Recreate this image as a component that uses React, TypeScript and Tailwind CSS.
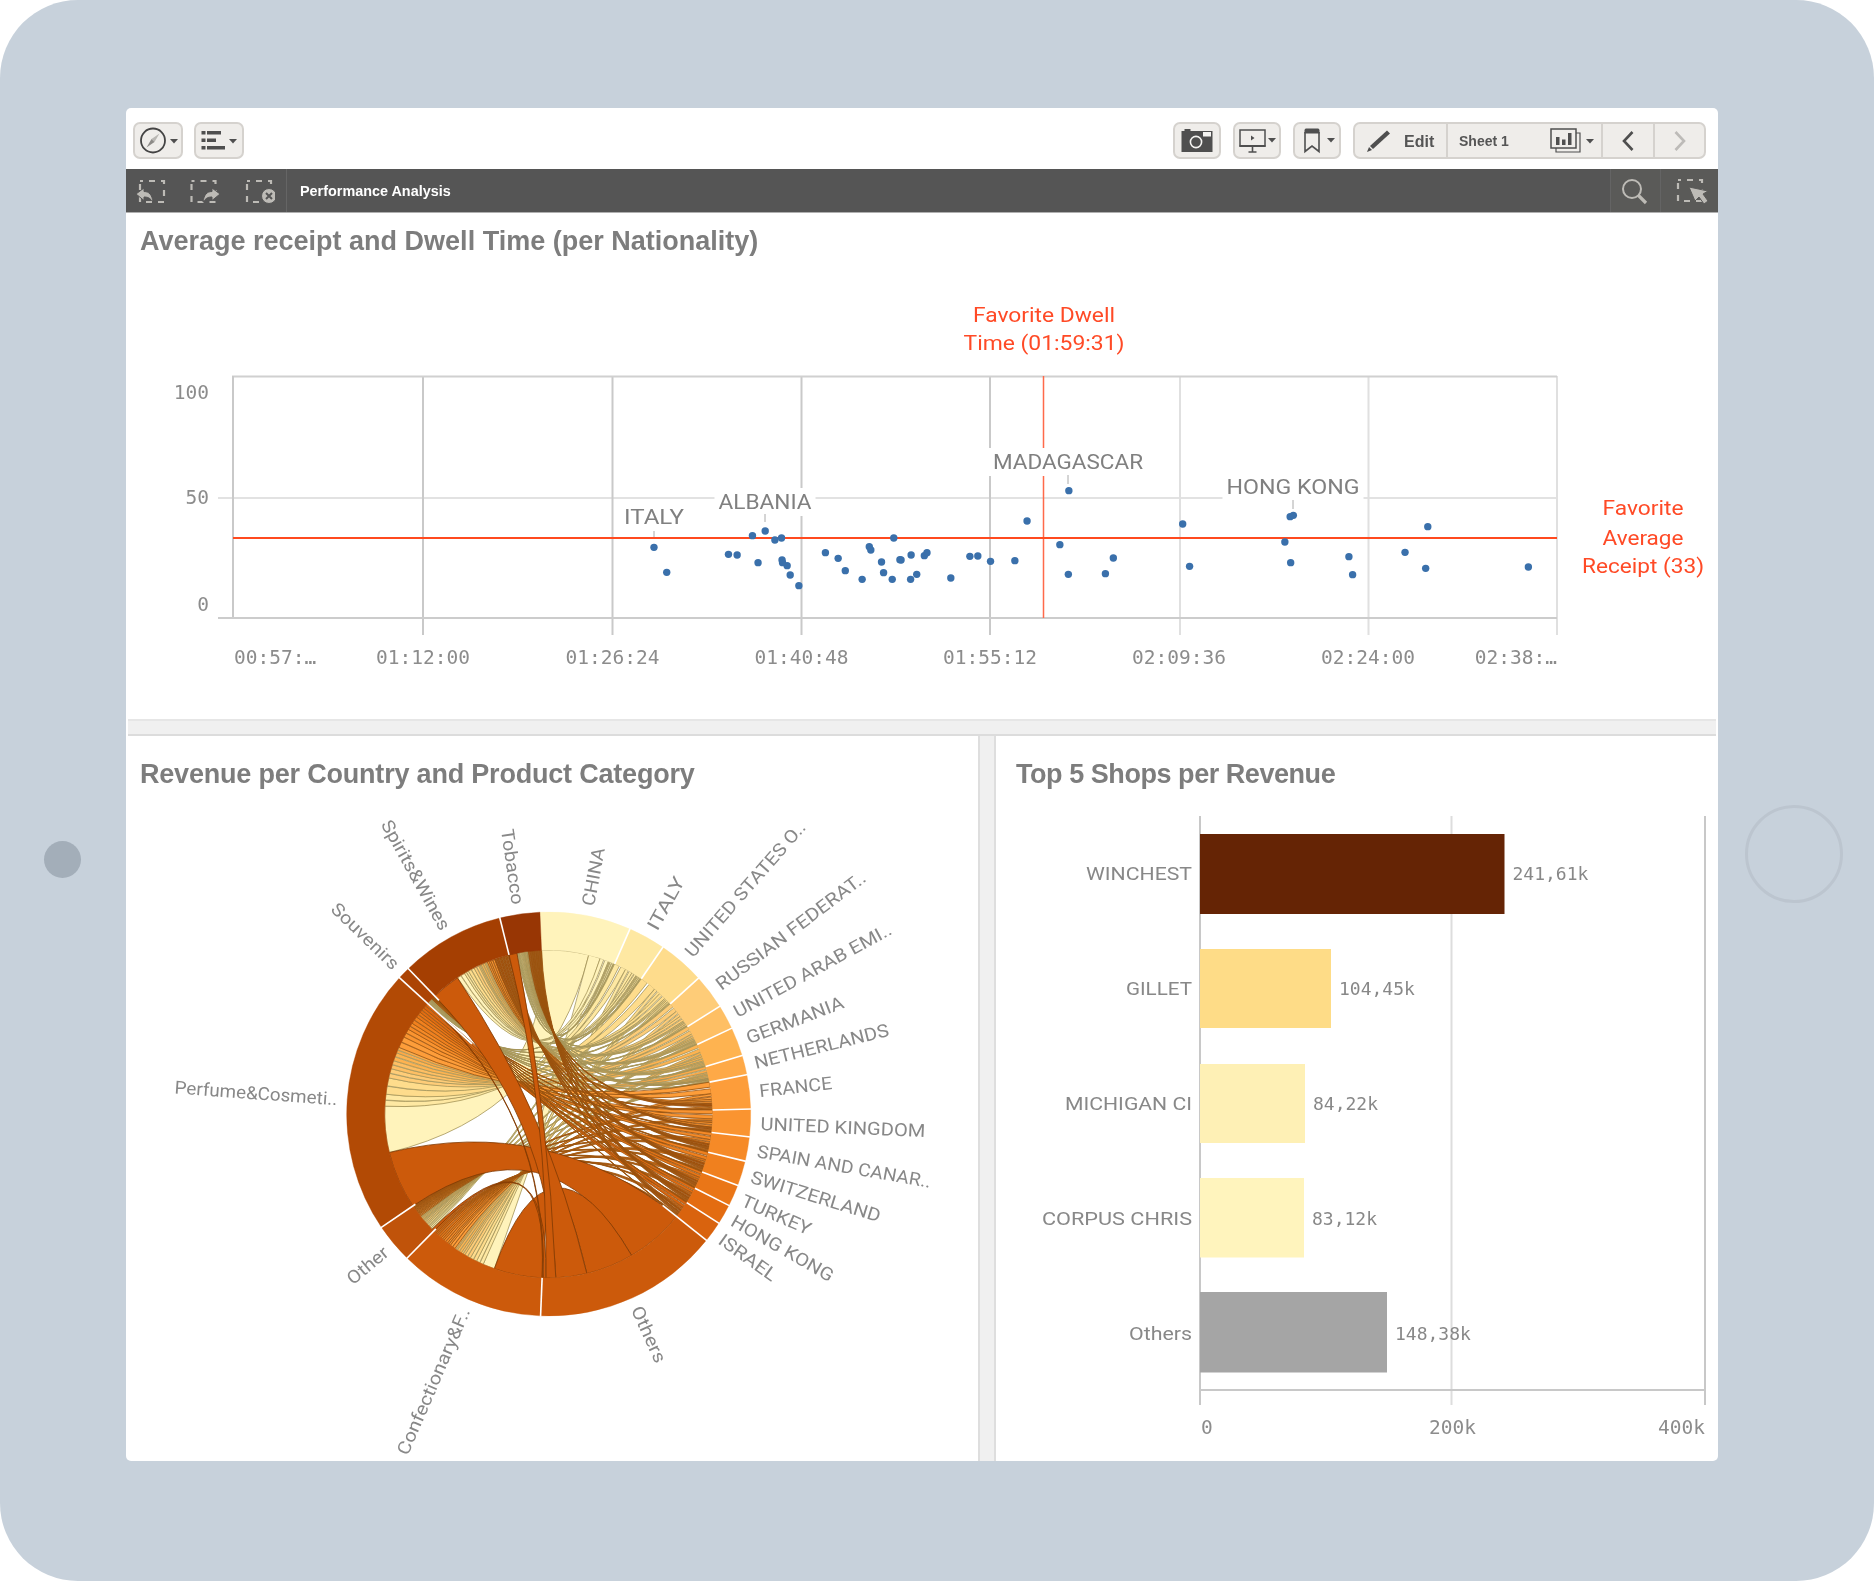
import React from "react";

const CX = 548.7, CY = 1114, R0 = 164, R1 = 202;
const rad = (d: number) => (d * Math.PI) / 180;
const pt = (a: number, r: number) => [CX + r * Math.sin(rad(a)), CY - r * Math.cos(rad(a))];
const f = (p: number[]) => `${p[0].toFixed(2)} ${p[1].toFixed(2)}`;

const countries = [
  { n: "CHINA", a: -2.5, b: 23.7, c: "#fff3bb", w: 59 },
  { n: "ITALY", a: 23.7, b: 34.4, c: "#fee8a2", w: 58 },
  { n: "UNITED STATES O..", a: 34.4, b: 47.8, c: "#fedc8c", w: 173 },
  { n: "RUSSIAN FEDERAT..", a: 47.8, b: 57.8, c: "#fecc78", w: 183 },
  { n: "UNITED ARAB EMI..", a: 57.8, b: 64.9, c: "#febf64", w: 177 },
  { n: "GERMANIA", a: 64.9, b: 73.2, c: "#feb350", w: 103 },
  { n: "NETHERLANDS", a: 73.2, b: 78.8, c: "#fea947", w: 138 },
  { n: "FRANCE", a: 78.8, b: 88.6, c: "#fd9d3a", w: 73 },
  { n: "UNITED KINGDOM", a: 88.6, b: 96.5, c: "#fa9430", w: 165 },
  { n: "SPAIN AND CANAR..", a: 96.5, b: 103.5, c: "#f68a27", w: 176 },
  { n: "SWITZERLAND", a: 103.5, b: 110.7, c: "#f0801e", w: 135 },
  { n: "TURKEY", a: 110.7, b: 116.9, c: "#ea7617", w: 74 },
  { n: "HONG KONG", a: 116.9, b: 122.7, c: "#e36c11", w: 115 },
  { n: "ISRAEL", a: 122.7, b: 128.7, c: "#d9630e", w: 67 },
  { n: "Others", a: 128.7, b: 182.3, c: "#cc5a0b", w: 60 },
];
const cats = [
  { n: "Perfume&Cosmeti..", a: 235.9, b: 312.4, c: "#b24a05", w: 163 },
  { n: "Confectionary&F..", a: 182.3, b: 224.5, c: "#cc5a0b", w: 158 },
  { n: "Spirits&Wines", a: 316, b: 346, c: "#a53f02", w: 123 },
  { n: "Tobacco", a: 346, b: 357.5, c: "#983604", w: 76 },
  { n: "Other", a: 224.5, b: 235.9, c: "#c0530a", w: 48 },
  { n: "Souvenirs", a: 312.4, b: 316, c: "#ac4404", w: 87 },
];
const shares = [
  [16, 4, 3, 0.6, 1.2, 0.4],
  [0.4, 0.24, 0.16, 0.06, 0.1, 0.04],
  [0.44, 0.18, 0.18, 0.07, 0.09, 0.04],
  [0.34, 0.22, 0.2, 0.08, 0.12, 0.04],
  [0.42, 0.2, 0.14, 0.08, 0.12, 0.04],
  [0.36, 0.2, 0.18, 0.1, 0.12, 0.04],
  [0.38, 0.18, 0.18, 0.1, 0.12, 0.04],
  [0.42, 0.2, 0.14, 0.1, 0.1, 0.04],
  [0.4, 0.16, 0.2, 0.1, 0.1, 0.04],
  [0.36, 0.22, 0.16, 0.1, 0.12, 0.04],
  [0.38, 0.18, 0.18, 0.12, 0.1, 0.04],
  [0.34, 0.22, 0.16, 0.12, 0.12, 0.04],
  [0.34, 0.18, 0.2, 0.14, 0.1, 0.04],
  [0.36, 0.18, 0.18, 0.14, 0.1, 0.04],
  [21, 17, 11, 3.5, 1, 0.3],
];
const matrix = shares.map((row, i) => {
  const total = row.reduce((s, v) => s + v, 0);
  return row.map((v) => (v / total) * (countries[i].b - countries[i].a));
});

type Chord = { d: string; fill: string; stroke: string; order: number };
const chordPath = (a0: number, a1: number, b0: number, b1: number) => {
  const p0 = pt(a0, R0), p1 = pt(a1, R0), q0 = pt(b0, R0), q1 = pt(b1, R0);
  return `M${f(p0)}A${R0} ${R0} 0 0 1 ${f(p1)}Q${CX} ${CY} ${f(q0)}A${R0} ${R0} 0 0 1 ${f(q1)}Q${CX} ${CY} ${f(p0)}Z`;
};
const buildChords = (): Chord[] => {
  const out: Chord[] = [];
  const catSpans: number[][][] = cats.map((cat, k) => {
    const order = [14, ...Array.from({ length: 14 }, (_, i) => i)];
    const total = matrix.reduce((s, r) => s + r[k], 0);
    const scale = (cat.b - cat.a) / total;
    const spans: number[][] = [];
    let at = cat.a;
    order.forEach((i) => {
      const w = matrix[i][k] * scale;
      spans[i] = [at, at + w];
      at += w;
    });
    return spans;
  });
  countries.forEach((cn, i) => {
    let at = cn.a;
    matrix[i].forEach((v, k) => {
      const a0 = at, a1 = at + v;
      at = a1;
      const [b0, b1] = catSpans[k][i];
      const dark = (k === 3 && i >= 6 && i < 14) || (k === 2 && i >= 9 && i < 14);
      const fill = dark ? "#a84e0a" : cn.c;
      const stroke = i < 7 ? "#a6965a" : i < 14 ? "#9a5410" : "#7f3a04";
      const order = i === 14 ? 100 + k : k === 3 ? 50 + i : k === 2 ? 30 + i : i;
      const wide = i === 14 || (i === 0 && k < 2);
      if (wide) {
        out.push({ d: chordPath(a0, a1, b0, b1), fill, stroke, order });
      } else {
        const am = (a0 + a1) / 2, bm = (b0 + b1) / 2, g = v * 0.07;
        out.push({ d: chordPath(a0, am - g, b0, bm - 0.06), fill, stroke, order });
        out.push({ d: chordPath(am + g, a1, bm + 0.06, b1), fill, stroke, order });
      }
    });
  });
  return out.sort((x, y) => x.order - y.order);
};
const chords = buildChords();

const arcPath = (a: number, b: number) => {
  const p0 = pt(a, R1), p1 = pt(b, R1), p2 = pt(b, R0), p3 = pt(a, R0);
  return `M${f(p0)}A${R1} ${R1} 0 0 1 ${f(p1)}L${f(p2)}A${R0} ${R0} 0 0 0 ${f(p3)}Z`;
};

const Label = ({ n, a, b, w }: { n: string; a: number; b: number; w: number }) => {
  const m = (a + b) / 2;
  const right = m < 180;
  const p = pt(m, 212);
  const rot = right ? m - 90 : m + 90;
  return (
    <text
      transform={`translate(${p[0].toFixed(1)} ${p[1].toFixed(1)}) rotate(${rot.toFixed(1)})`}
      textAnchor={right ? "start" : "end"}
      dominantBaseline="central"
      textLength={w}
      lengthAdjust="spacingAndGlyphs"
      className="fill-[#888888] font-['Roboto',sans-serif] text-[18px]"
    >
      {n}
    </text>
  );
};

const boundaries: [number, number][] = [
  [23.7, R0], [34.4, R0], [47.8, R0], [57.8, R0], [64.9, R0], [73.2, R0], [78.8, R0], [88.6, R0], [96.5, R0], [103.5, R0],
  [110.7, R0], [116.9, R0], [122.7, R0], [128.7, 146], [182.3, R0], [224.5, R0 - 3], [235.9, R0 - 3], [312.4, 104], [316, 158], [346, R0],
];

const ChordChart = () => (
  <svg viewBox="126 800 852 661" className="block w-[852px] h-[661px]">
    {chords.map((c, i) => (
      <path key={i} d={c.d} fill={c.fill} stroke={c.stroke} strokeWidth={0.9} strokeOpacity={0.9} />
    ))}
    {[...countries, ...cats].map((g) => (
      <path key={g.n} d={arcPath(g.a, g.b)} fill={g.c} stroke={g.c} strokeWidth={0.4} />
    ))}
    {boundaries.map(([a, r]) => {
      const p = pt(a, R1 + 1), q = pt(a, r);
      return <line key={a} x1={p[0]} y1={p[1]} x2={q[0]} y2={q[1]} stroke="#ffffff" strokeWidth={1.6} />;
    })}
    {[...countries, ...cats].map((g) => (
      <Label key={g.n} n={g.n} a={g.a} b={g.b} w={g.w} />
    ))}
  </svg>
);

const z3 = [
  [1027, 562], [1052, 637], [1173, 583], [1190, 585], [1220, 527], [1231, 608], [1245, 513], [1264, 540], [1277, 534],
  [1278, 600], [1288, 617], [1279, 608], [1294, 645], [1311, 677], [1363, 578], [1388, 595], [1402, 632], [1435, 658],
  [1449, 560], [1452, 570], [1473, 606], [1477, 638], [1494, 658], [1497, 534], [1509, 599], [1530, 658], [1531, 585], [1542, 643],
];
const z4 = [
  [2, 600], [46, 587], [51, 578], [96, 654], [132, 589], [147, 588], [171, 604], [217, 602], [240, 483], [302, 554], [318, 643],
  [319, 392], [388, 641], [403, 594], [534, 492], [547, 619], [727, 546], [737, 470], [743, 466], [738, 608], [848, 590], [855, 644],
  [954, 577], [993, 625], [997, 500], [1187, 621],
];
const points = [
  ...z3.map(([x, y]) => [x / 1.96 + 130, y / 3 + 360]),
  ...z4.map(([x, y]) => [x / 1.889 + 900, y / 3 + 360]),
];

const axisText = "fill-[#8c8c8c] font-['DejaVu_Sans_Mono',monospace] text-[19.5px]";
const red = "fill-[#ff4a26] font-['Roboto',sans-serif] text-[20px]";
const lab = "fill-[#808080] font-['Roboto',sans-serif] text-[21px]";

const ScatterLabel = ({ t, x, y, w, ly0, ly1 }: { t: string; x: number; y: number; w: number; ly0: number; ly1: number }) => (
  <g>
    <rect x={x - w / 2 - 4} y={y - 14} width={w + 8} height={28} fill="#ffffff" />
    <text x={x} y={y} textAnchor="middle" dominantBaseline="central" textLength={w} lengthAdjust="spacingAndGlyphs" className={lab}>
      {t}
    </text>
    <line x1={x} x2={x} y1={ly0} y2={ly1} stroke="#aaaaaa" strokeWidth={1} />
  </g>
);

const ScatterChart = () => (
  <svg viewBox="126 268 1592 451" className="block w-[1592px] h-[451px]">
    <line x1={218} x2={1557} y1={498} y2={498} stroke="#e2e2e2" strokeWidth={2} />
    {[423, 612.5, 801.5, 990].map((x) => (
      <line key={x} x1={x} x2={x} y1={376} y2={635} stroke="#c9c9c9" strokeWidth={2} />
    ))}
    {[1180, 1368.5, 1557].map((x) => (
      <line key={x} x1={x} x2={x} y1={376} y2={635} stroke="#e0e0e0" strokeWidth={2} />
    ))}
    <line x1={232} x2={1557} y1={376.5} y2={376.5} stroke="#d0d0d0" strokeWidth={2} />
    <line x1={233} x2={233} y1={376} y2={618} stroke="#c9c9c9" strokeWidth={2} />
    <line x1={218} x2={1557} y1={618} y2={618} stroke="#cccccc" strokeWidth={2} />
    <line x1={1043.5} x2={1043.5} y1={376} y2={618} stroke="#ff6a4a" strokeWidth={1.5} />
    <line x1={233} x2={1557} y1={538} y2={538} stroke="#ff4a1f" strokeWidth={2.2} />
    <ScatterLabel t="ITALY" x={654} y={517} w={60} ly0={531} ly1={537} />
    <ScatterLabel t="ALBANIA" x={765} y={502} w={93} ly0={514} ly1={522} />
    <ScatterLabel t="MADAGASCAR" x={1068} y={462} w={150} ly0={475} ly1={484} />
    <ScatterLabel t="HONG KONG" x={1293} y={487} w={133} ly0={500} ly1={509} />
    {points.map(([x, y], i) => (
      <circle key={i} cx={x} cy={y} r={3.7} fill="#3a70ab" />
    ))}
    <text x={209} y={392} textAnchor="end" dominantBaseline="central" className={axisText}>100</text>
    <text x={209} y={497} textAnchor="end" dominantBaseline="central" className={axisText}>50</text>
    <text x={209} y={604} textAnchor="end" dominantBaseline="central" className={axisText}>0</text>
    <text x={234} y={657} dominantBaseline="central" className={axisText}>00:57:…</text>
    {[
      ["01:12:00", 423], ["01:26:24", 612.5], ["01:40:48", 801.5], ["01:55:12", 990], ["02:09:36", 1179], ["02:24:00", 1368],
    ].map(([t, x]) => (
      <text key={t as string} x={x as number} y={657} textAnchor="middle" dominantBaseline="central" className={axisText}>{t}</text>
    ))}
    <text x={1557} y={657} textAnchor="end" dominantBaseline="central" className={axisText}>02:38:…</text>
    <text x={1044} y={315} textAnchor="middle" dominantBaseline="central" textLength={142} lengthAdjust="spacingAndGlyphs" className={red}>Favorite Dwell</text>
    <text x={1044} y={343} textAnchor="middle" dominantBaseline="central" textLength={161} lengthAdjust="spacingAndGlyphs" className={red}>Time (01:59:31)</text>
    <text x={1643} y={508} textAnchor="middle" dominantBaseline="central" textLength={81} lengthAdjust="spacingAndGlyphs" className={red}>Favorite</text>
    <text x={1643} y={538} textAnchor="middle" dominantBaseline="central" textLength={81} lengthAdjust="spacingAndGlyphs" className={red}>Average</text>
    <text x={1643} y={566} textAnchor="middle" dominantBaseline="central" textLength={122} lengthAdjust="spacingAndGlyphs" className={red}>Receipt (33)</text>
  </svg>
);

const bars = [
  { l: "WINCHEST", lw: 106, y0: 834, y1: 914, x: 1504.5, c: "#652405", v: "241,61k", dy: -1 },
  { l: "GILLET", lw: 66, y0: 949, y1: 1028, x: 1331, c: "#fedc87", v: "104,45k", dy: 0 },
  { l: "MICHIGAN CI", lw: 127, y0: 1064, y1: 1143, x: 1305, c: "#fef0b5", v: "84,22k", dy: 0 },
  { l: "CORPUS CHRIS", lw: 150, y0: 1178, y1: 1257.5, x: 1304, c: "#fff4bd", v: "83,12k", dy: 1 },
  { l: "Others", lw: 63, y0: 1292, y1: 1372.5, x: 1387, c: "#a5a5a5", v: "148,38k", dy: 1 },
];

const BarChart = () => (
  <svg viewBox="996 800 722 661" className="block w-[722px] h-[661px]">
    <line x1={1451.5} x2={1451.5} y1={816} y2={1405} stroke="#dddddd" strokeWidth={2} />
    <line x1={1705} x2={1705} y1={816} y2={1405} stroke="#c8c8c8" strokeWidth={2} />
    <line x1={1200} x2={1200} y1={816} y2={1405} stroke="#c8c8c8" strokeWidth={2} />
    <line x1={1200} x2={1705} y1={1390} y2={1390} stroke="#c8c8c8" strokeWidth={2} />
    {bars.map((b) => (
      <g key={b.l}>
        <rect x={1200} y={b.y0} width={b.x - 1200} height={b.y1 - b.y0} fill={b.c} />
        <text x={1192} y={(b.y0 + b.y1) / 2 + b.dy} textAnchor="end" dominantBaseline="central" textLength={b.lw} lengthAdjust="spacingAndGlyphs" className="fill-[#888888] font-['Roboto',sans-serif] text-[19px]">
          {b.l}
        </text>
        <text x={b.x + 8} y={(b.y0 + b.y1) / 2 + b.dy} dominantBaseline="central" className="fill-[#888888] font-['DejaVu_Sans_Mono',monospace] text-[18px]">
          {b.v}
        </text>
      </g>
    ))}
    <text x={1201} y={1427} dominantBaseline="central" className={axisText}>0</text>
    <text x={1452.5} y={1427} textAnchor="middle" dominantBaseline="central" className={axisText}>200k</text>
    <text x={1705} y={1427} textAnchor="end" dominantBaseline="central" className={axisText}>400k</text>
  </svg>
);

const Caret = ({ x, y }: { x: number; y: number }) => <polygon points={`${x - 4},${y - 2} ${x + 4},${y - 2} ${x},${y + 2.5}`} fill="#4f4f4f" />;

const btn = "h-[37px] bg-[#efedea] border-2 border-[#d5d2ce] rounded-[7px] flex items-center justify-center";

const DashedBox = ({ x, y, w, h }: { x: number; y: number; w: number; h: number }) => (
  <rect x={x} y={y} width={w} height={h} fill="none" stroke="#bdbbb6" strokeWidth={2.2} strokeDasharray="6 6" strokeDashoffset={3} />
);

const Toolbar = () => (
  <div className="h-[61px] shrink-0 flex pt-[14px] pl-[7px] pr-[12px] items-start">
    <div className="flex gap-[11px]">
      <div className={`${btn} w-[50px]`}>
        <svg viewBox="0 0 46 33" className="w-[46px] h-[33px]">
          <circle cx={18} cy={16.5} r={12} fill="none" stroke="#444444" strokeWidth={1.8} />
          <polygon points="24.5,9.5 19.5,18 16.5,15" fill="#b9b7b3" />
          <polygon points="11.5,23.5 16.5,15 19.5,18" fill="#8d8b88" />
          <Caret x={39} y={17} />
        </svg>
      </div>
      <div className={`${btn} w-[50px]`}>
        <svg viewBox="0 0 46 33" className="w-[46px] h-[33px]">
          <rect x={5.5} y={7} width={4} height={3.5} fill="#4f4f4f" />
          <rect x={11} y={7} width={14} height={3.5} fill="#4f4f4f" />
          <rect x={5.5} y={14.5} width={4} height={3.5} fill="#4f4f4f" />
          <rect x={11} y={14.5} width={9} height={3.5} fill="#4f4f4f" />
          <rect x={5.5} y={22} width={4} height={3.5} fill="#4f4f4f" />
          <rect x={11} y={22} width={18} height={3.5} fill="#4f4f4f" />
          <Caret x={37} y={17} />
        </svg>
      </div>
    </div>
    <div className="ml-auto flex gap-[12px]">
      <div className={`${btn} w-[48px]`}>
        <svg viewBox="0 0 44 33" className="w-[44px] h-[33px]">
          <path d="M6.5 7h3V5h6v2h22v21H6.5z" fill="#4f4f4f" />
          <circle cx={21} cy={18} r={5.6} fill="none" stroke="#f5f4f2" strokeWidth={1.6} />
          <rect x={28} y={8} width={8} height={4.5} fill="#f5f4f2" />
        </svg>
      </div>
      <div className={`${btn} w-[48px]`}>
        <svg viewBox="0 0 44 33" className="w-[44px] h-[33px]">
          <rect x={5} y={6} width={25} height={16} fill="none" stroke="#4f4f4f" strokeWidth={1.5} />
          <line x1={4.5} x2={30.5} y1={22} y2={22} stroke="#4f4f4f" strokeWidth={2} />
          <polygon points="16,11.5 19.5,14 16,16.5" fill="#4f4f4f" />
          <line x1={17.5} x2={17.5} y1={22} y2={28} stroke="#4f4f4f" strokeWidth={1.6} />
          <line x1={13.5} x2={21.5} y1={28} y2={28} stroke="#4f4f4f" strokeWidth={1.6} />
          <Caret x={37} y={16} />
        </svg>
      </div>
      <div className={`${btn} w-[48px]`}>
        <svg viewBox="0 0 44 33" className="w-[44px] h-[33px]">
          <path d="M10 8 V27.5 L17 22 L24 27.5 V8" fill="none" stroke="#4f4f4f" strokeWidth={1.6} />
          <path d="M9.5 9.5V6.5c0-1.5 1-2 2-2h11c1 0 2 .5 2 2v3z" fill="#4f4f4f" />
          <Caret x={36} y={16} />
        </svg>
      </div>
      <div className="h-[37px] w-[353px] bg-[#efedea] border-2 border-[#d5d2ce] rounded-[7px] flex font-['Liberation_Sans',sans-serif] font-bold text-[#555555]">
        <div className="w-[93px] border-r-2 border-[#d5d2ce] flex items-center">
          <svg viewBox="0 0 26 24" className="w-[26px] h-[24px] ml-[10px]">
            <path d="M22 1.5 L25 4.5 L8 20 L5 17z" fill="#4f4f4f" />
            <path d="M4 18 L7 21 L2 23z" fill="#4f4f4f" />
          </svg>
          <span className="ml-[13px] pt-[2px] text-[16px]">Edit</span>
        </div>
        <div className="w-[155px] border-r-2 border-[#d5d2ce] flex items-center pl-[11px]">
          <span className="pt-[1px] text-[14px]">Sheet 1</span>
          <svg viewBox="0 0 46 26" className="w-[46px] h-[26px] ml-auto mr-[5px]">
            <rect x={1} y={1} width={25} height={19} fill="none" stroke="#4f4f4f" strokeWidth={1.5} />
            <path d="M26 5h4v19H6v-4" fill="none" stroke="#4f4f4f" strokeWidth={1.2} />
            <rect x={6} y={9} width={3.5} height={8} fill="#4f4f4f" />
            <rect x={12} y={11.5} width={3.5} height={5.5} fill="#4f4f4f" />
            <rect x={18} y={5} width={3.5} height={12} fill="#4f4f4f" />
            <Caret x={40} y={13} />
          </svg>
        </div>
        <div className="w-[52px] border-r-2 border-[#d5d2ce] flex items-center justify-center">
          <svg viewBox="0 0 14 22" className="w-[14px] h-[22px]">
            <polyline points="11.5,2 3,11 11.5,20" fill="none" stroke="#4f4f4f" strokeWidth={2.6} />
          </svg>
        </div>
        <div className="flex-1 flex items-center justify-center">
          <svg viewBox="0 0 14 22" className="w-[14px] h-[22px]">
            <polyline points="2.5,2 11,11 2.5,20" fill="none" stroke="#bdbbb8" strokeWidth={2.6} />
          </svg>
        </div>
      </div>
    </div>
  </div>
);

const SelectionBar = () => (
  <div className="h-[44px] shrink-0 bg-[#555555] border-b border-[#b0b0b0] flex items-stretch">
    <div className="w-[161px] border-r border-[#656565] flex items-center pl-[10px] gap-[24px]">
      <svg viewBox="0 0 30 28" className="w-[30px] h-[28px]">
        <DashedBox x={4} y={4} w={24} h={21} />
        <path d="M0 17 L8 11 V14.5 C13 14.5 16 17.5 17 25 C14 21 12 20 8 20 V23.5z" fill="#bdbbb6" stroke="#555555" strokeWidth={1} />
      </svg>
      <svg viewBox="0 0 30 28" className="w-[30px] h-[28px]">
        <DashedBox x={1.5} y={4} w={24} h={21} />
        <path d="M30 17 L22 11 V14.5 C17 14.5 14 17.5 13 25 C16 21 18 20 22 20 V23.5z" fill="#bdbbb6" stroke="#555555" strokeWidth={1} />
      </svg>
      <svg viewBox="0 0 30 28" className="w-[30px] h-[28px] ml-[1px]">
        <DashedBox x={2} y={4} w={24} h={21} />
        <circle cx={24} cy={19} r={7.5} fill="#bdbbb6" stroke="#555555" strokeWidth={1} />
        <path d="M21 16 L27 22 M27 16 L21 22" stroke="#555555" strokeWidth={2} />
      </svg>
    </div>
    <div className="pl-[13px] pt-[2px] flex items-center font-['Liberation_Sans',sans-serif] font-bold text-white text-[14.4px]">Performance Analysis</div>
    <div className="ml-auto w-[51px] bg-[#5a5a58] border-x border-[#646464] flex items-center justify-center">
      <svg viewBox="0 0 28 28" className="w-[28px] h-[28px] mr-[4px]">
        <circle cx={12} cy={12} r={9} fill="none" stroke="#bdbbb6" strokeWidth={2} />
        <line x1={18.5} y1={18.5} x2={26} y2={26} stroke="#bdbbb6" strokeWidth={3.2} />
      </svg>
    </div>
    <div className="w-[57px] bg-[#5a5a58] flex items-center pl-[14px]">
      <svg viewBox="0 0 34 28" className="w-[34px] h-[28px]">
        <DashedBox x={3} y={3} w={24} h={21} />
        <path d="M14 10 L33 14 L28 17 L33 24 L29 27 L24 20 L20 24z" fill="#bdbbb6" stroke="#5a5a58" strokeWidth={1} />
      </svg>
    </div>
  </div>
);

const titleCls = "font-['Liberation_Sans',sans-serif] font-bold text-[#7d7d7d] text-[27px] leading-[36px]";

export default function App() {
  return (
    <div className="w-[1874px] h-[1581px] bg-[#c7d1db] rounded-[78px] flex overflow-hidden">
      <div className="w-[126px] shrink-0 flex justify-center pr-[2px] pt-[841px]">
        <div className="w-[37px] h-[37px] rounded-full bg-[#a3aeb9]" />
      </div>
      <div className="w-[1592px] h-[1353px] mt-[108px] bg-white rounded-[5px] overflow-hidden flex flex-col shrink-0 blur-[0.7px]">
        <Toolbar />
        <SelectionBar />
        <section className="h-[506px] shrink-0">
          <h2 className={`${titleCls} h-[55px] pt-[10px] pl-[14px]`}>Average receipt and Dwell Time (per Nationality)</h2>
          <ScatterChart />
        </section>
        <div className="h-[17px] shrink-0 mx-[2px] bg-[#f0f0f0] border-t-2 border-b-2 border-t-[#e6e6e6] border-b-[#dcdcdc]" />
        <div className="flex-1 flex min-h-0">
          <section className="w-[852px] shrink-0">
            <h2 className={`${titleCls} h-[64px] pt-[20px] pl-[14px] tracking-[-0.2px]`}>Revenue per Country and Product Category</h2>
            <ChordChart />
          </section>
          <div className="w-[18px] shrink-0 bg-[#f0f0f0] border-x-2 border-x-[#dedede]" />
          <section className="flex-1">
            <h2 className={`${titleCls} h-[64px] pt-[20px] pl-[20px] tracking-[-0.45px]`}>Top 5 Shops per Revenue</h2>
            <BarChart />
          </section>
        </div>
      </div>
      <div className="flex-1 flex justify-center pr-[4px] pt-[805px]">
        <div className="w-[98px] h-[98px] rounded-full border-[3px] border-[#bcc5cf]" />
      </div>
    </div>
  );
}
